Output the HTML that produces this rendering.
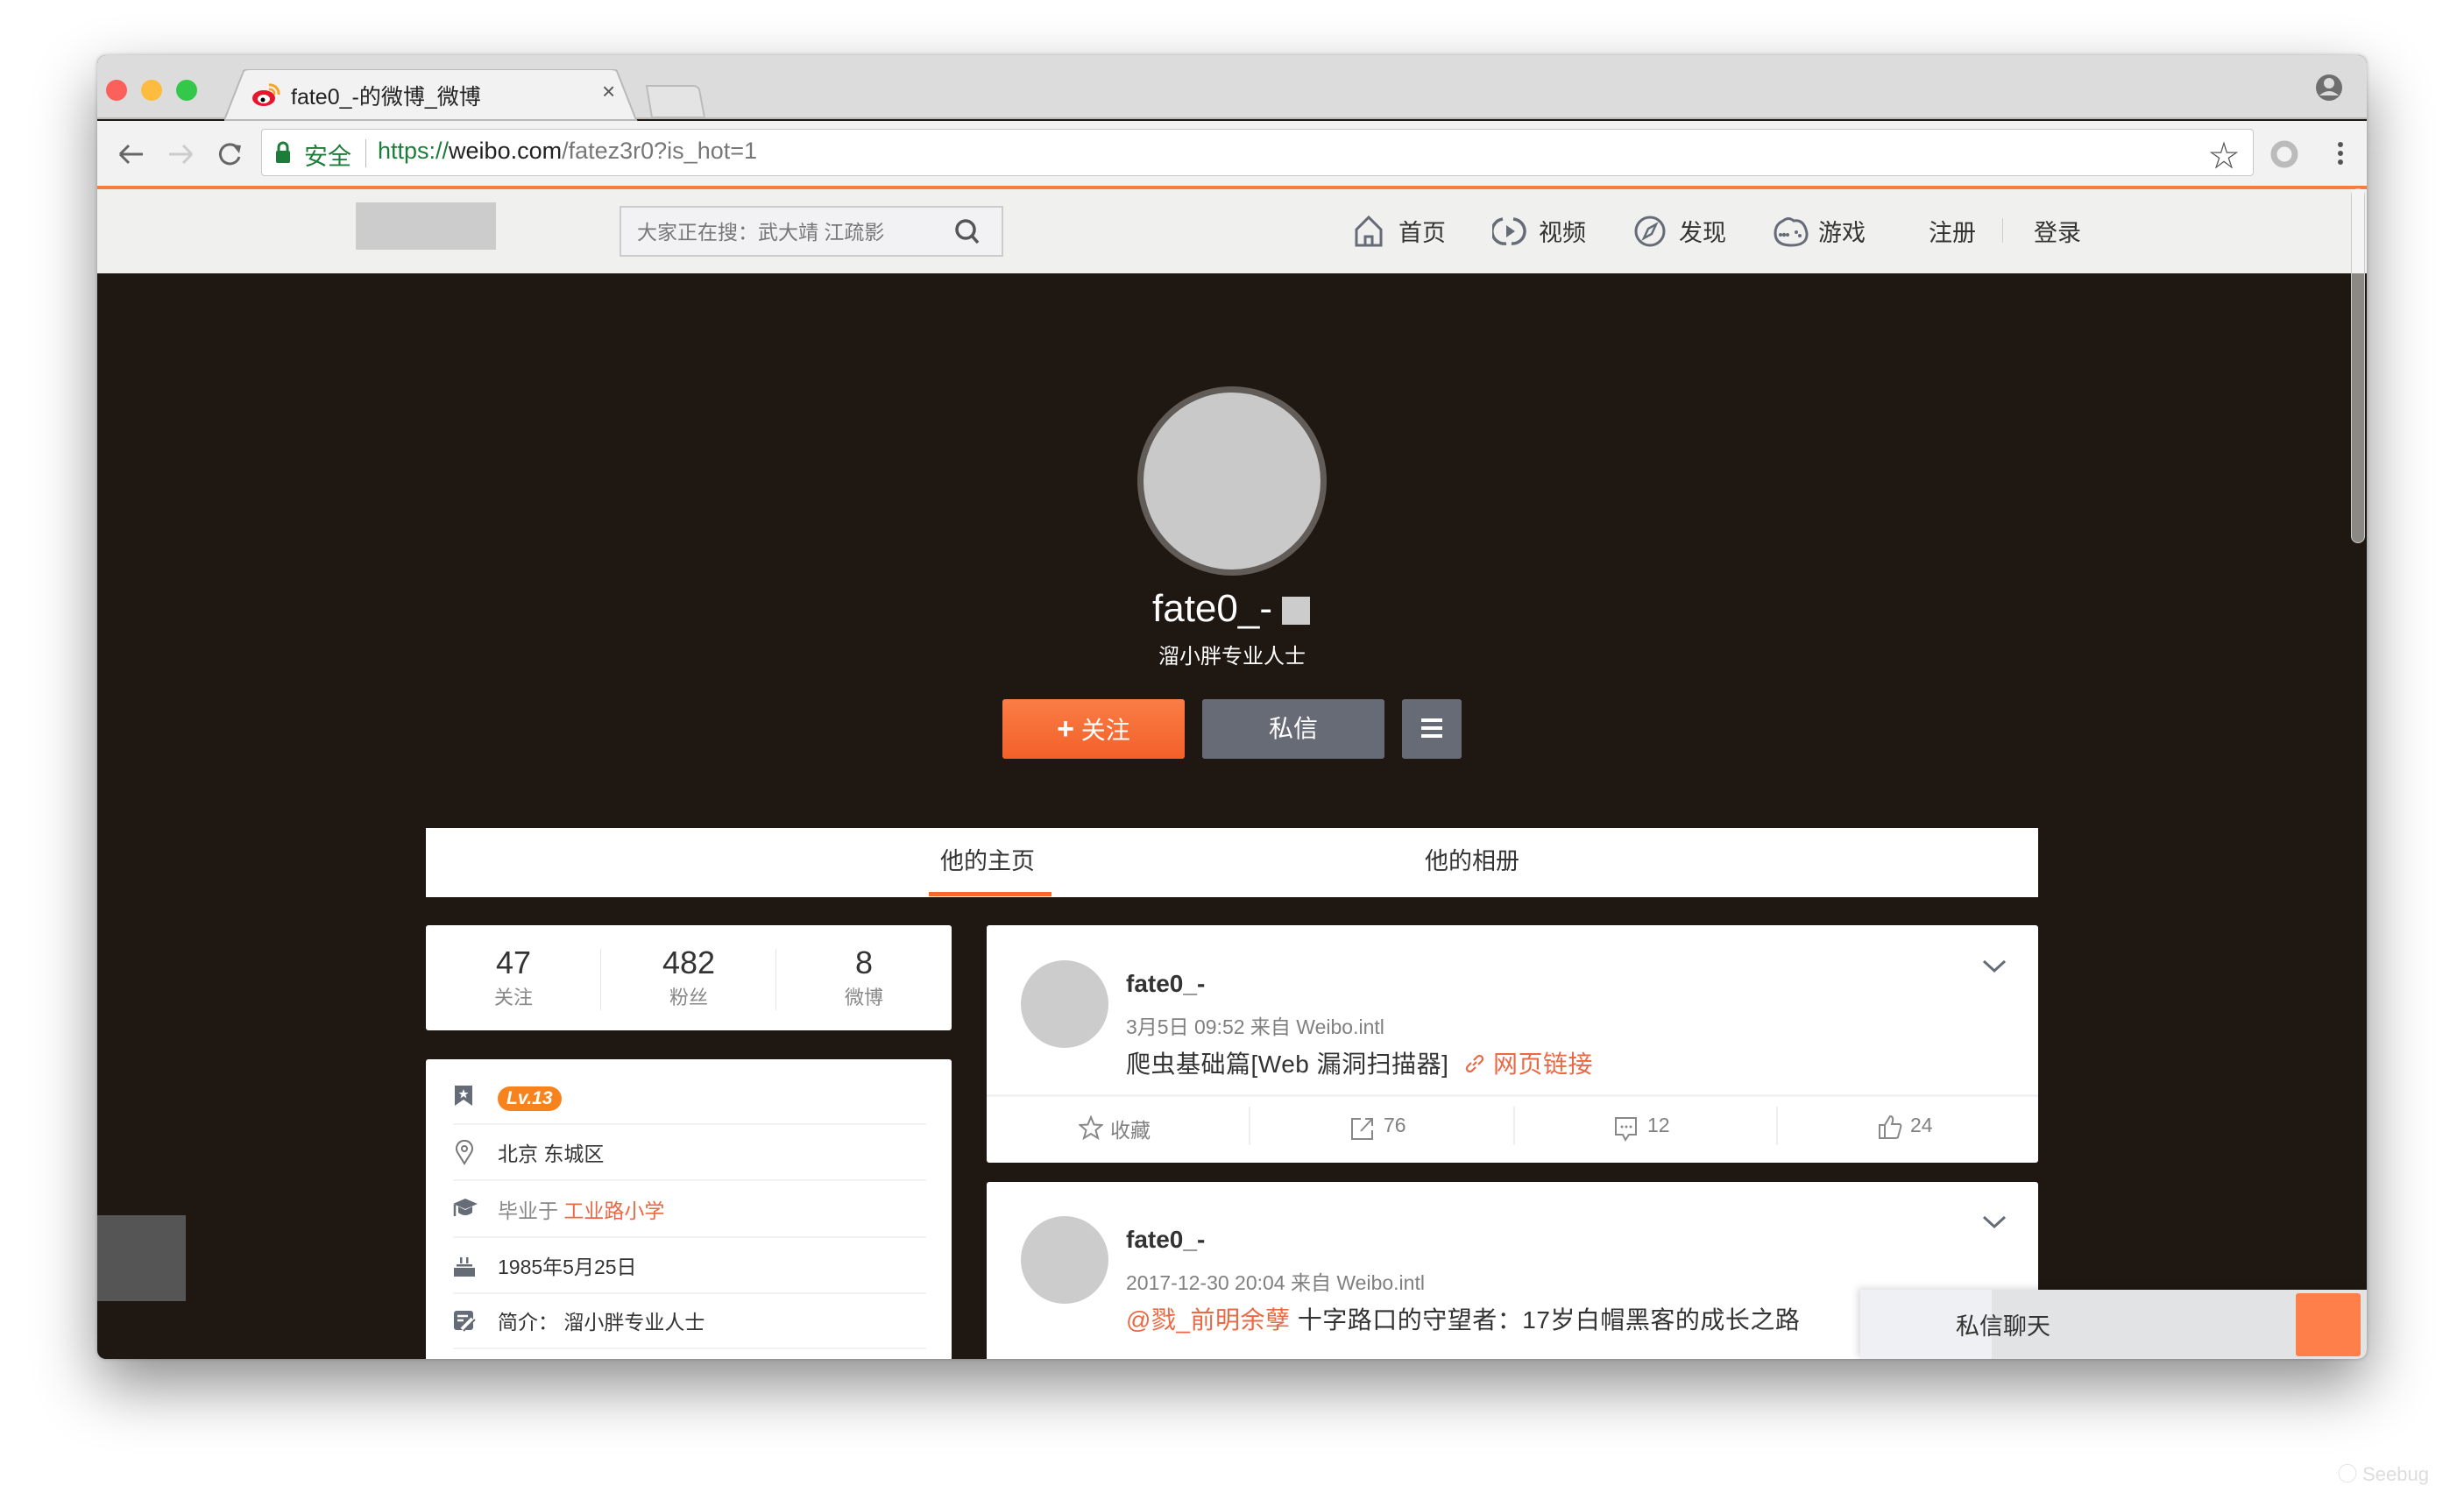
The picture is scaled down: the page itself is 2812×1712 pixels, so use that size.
<!DOCTYPE html>
<html><head><meta charset="utf-8">
<style>
*{margin:0;padding:0;box-sizing:border-box}
body{width:2812px;height:1712px;background:#fff;position:relative;overflow:hidden;font-family:"Liberation Sans","Noto Sans CJK SC",sans-serif;color:#333}
.a{position:absolute}
.win{left:111px;top:63px;width:2590px;height:1488px;border-radius:10px;overflow:hidden;background:#1f1712;box-shadow:0 30px 70px rgba(0,0,0,.45),0 0 4px rgba(0,0,0,.25)}
.t{white-space:nowrap}
</style></head><body>
<div class="a win">
  <div class="a" style="left:0;top:0;width:2590px;height:73px;background:#dcdcdc;border-bottom:2px solid #b8b8b8"></div>
  <div class="a" style="left:10px;top:28px;width:24px;height:24px;border-radius:50%;background:#fc605b"></div>
  <div class="a" style="left:50px;top:28px;width:24px;height:24px;border-radius:50%;background:#fdbc40"></div>
  <div class="a" style="left:90px;top:28px;width:24px;height:24px;border-radius:50%;background:#34c84a"></div>
  <svg class="a" style="left:145px;top:16px" width="480" height="60"><path d="M0 58 L22 2 Q24 0 30 0 L440 0 Q446 0 448 2 L470 58 Z" fill="#f2f2f2" stroke="#b8b8b8" stroke-width="2"/></svg>
  <svg class="a" style="left:625px;top:33px" width="70" height="40"><path d="M2 2 L55 2 Q60 2 62 6 L68 38 L8 38 Z" fill="#e4e4e4" stroke="#bbb" stroke-width="2"/></svg>
  <svg class="a" style="left:176px;top:30px" width="34" height="30"><ellipse cx="14" cy="19" rx="13" ry="9" fill="#e6162d"/><ellipse cx="14" cy="20" rx="7" ry="5" fill="#fff"/><circle cx="13" cy="21" r="2.5" fill="#000"/><path d="M20 4 A10 10 0 0 1 31 15" fill="none" stroke="#f5a623" stroke-width="3"/><path d="M20 9 A5 5 0 0 1 26 15" fill="none" stroke="#f5a623" stroke-width="2.5"/></svg>
  <div class="a t" style="left:221px;top:28px;font-size:25px;color:#222">fate0_-的微博_微博</div>
  <div class="a t" style="left:576px;top:26px;font-size:26px;color:#555">×</div>
  <svg class="a" style="left:2530px;top:20px" width="34" height="34"><circle cx="17" cy="17" r="15" fill="#6e6e6e"/><circle cx="17" cy="12" r="6" fill="#dcdcdc"/><path d="M6 26 Q17 16 28 26" fill="#dcdcdc"/></svg>
  <div class="a" style="left:0;top:75px;width:2590px;height:75px;background:#f2f2f2"></div>
  <svg class="a" style="left:22px;top:96px" width="150" height="34"><path d="M4 17 H30 M4 17 L14 7 M4 17 L14 27" stroke="#666" stroke-width="3" fill="none"/><path d="M60 17 H86 M86 17 L76 7 M86 17 L76 27" stroke="#ccc" stroke-width="3" fill="none"/><path d="M138 10 A11 11 0 1 0 140 20" stroke="#666" stroke-width="3" fill="none"/><path d="M132 6 L142 7 L140 16 Z" fill="#666"/></svg>
  <div class="a" style="left:187px;top:84px;width:2274px;height:54px;background:#fff;border:1px solid #c8c8c8;border-radius:4px"></div>
  <svg class="a" style="left:202px;top:98px" width="22" height="26"><rect x="2" y="11" width="16" height="14" rx="2" fill="#1c7c3a"/><path d="M5 12 V7 A5 5 0 0 1 15 7 V12" fill="none" stroke="#1c7c3a" stroke-width="3"/></svg>
  <div class="a t" style="left:236px;top:94px;font-size:27px;color:#1c7c3a">安全</div>
  <div class="a" style="left:306px;top:96px;width:1px;height:32px;background:#bbb"></div>
  <div class="a t" style="left:320px;top:94px;font-size:27px;color:#777"><span style="color:#1c7c3a">https://</span><span style="color:#222">weibo.com</span>/fatez3r0?is_hot=1</div>
  <div class="a t" style="left:2410px;top:88px;font-size:34px;color:#555">☆</div>
  <svg class="a" style="left:2479px;top:96px" width="34" height="34"><circle cx="17" cy="17" r="12" fill="none" stroke="#bbb" stroke-width="7"/></svg>
  <svg class="a" style="left:2554px;top:96px" width="12" height="34"><circle cx="6" cy="6" r="3" fill="#555"/><circle cx="6" cy="16" r="3" fill="#555"/><circle cx="6" cy="26" r="3" fill="#555"/></svg>
  <div class="a" style="left:0;top:149px;width:2590px;height:4px;background:#f77c3e"></div>
  <div class="a" style="left:0;top:153px;width:2590px;height:96px;background:#f0f0ef"></div>
  <div class="a" style="left:295px;top:168px;width:160px;height:54px;background:#ccc"></div>
  <div class="a" style="left:596px;top:172px;width:438px;height:58px;background:#f2f2f4;border:2px solid #ccc"></div>
  <div class="a t" style="left:616px;top:183px;font-size:23px;color:#777">大家正在搜：武大靖 江疏影</div>
  <svg class="a" style="left:976px;top:184px" width="34" height="34"><circle cx="15" cy="15" r="10" fill="none" stroke="#555" stroke-width="3.5"/><path d="M22 22 L29 30" stroke="#555" stroke-width="3.5"/></svg>
  <svg class="a" style="left:1432px;top:181px" width="40" height="40"><path d="M5 36 V18 L19 4 L33 18 V36 Z" fill="none" stroke="#666c77" stroke-width="3"/><path d="M15 36 V26 H23 V36" fill="none" stroke="#666c77" stroke-width="3"/></svg>
  <div class="a t" style="left:1485px;top:181px;font-size:27px;color:#333">首页</div>
  <svg class="a" style="left:1592px;top:181px" width="40" height="40"><path d="M12 6 A14 14 0 0 0 16 34 M24 6 A14 14 0 0 1 22 34" fill="none" stroke="#666c77" stroke-width="3.5"/><path d="M16 13 L26 20 L16 27 Z" fill="#666c77"/></svg>
  <div class="a t" style="left:1645px;top:181px;font-size:27px;color:#333">视频</div>
  <svg class="a" style="left:1752px;top:181px" width="40" height="40"><circle cx="20" cy="20" r="16" fill="none" stroke="#666c77" stroke-width="3"/><path d="M27 12 L22 23 L13 28 L18 17 Z" fill="none" stroke="#666c77" stroke-width="2.5"/></svg>
  <div class="a t" style="left:1805px;top:181px;font-size:27px;color:#333">发现</div>
  <svg class="a" style="left:1912px;top:181px" width="42" height="40"><path d="M12 8 Q18 3 24 8 Q36 6 39 22 Q40 36 21 36 Q3 36 3 22 Q3 12 12 8 Z" fill="none" stroke="#666c77" stroke-width="3"/><circle cx="13" cy="24" r="2.2" fill="#666c77"/><circle cx="9" cy="24" r="2" fill="#666c77"/><circle cx="17" cy="24" r="2" fill="#666c77"/><circle cx="27" cy="21" r="2" fill="#666c77"/><circle cx="31" cy="25" r="2" fill="#666c77"/></svg>
  <div class="a t" style="left:1964px;top:181px;font-size:27px;color:#333">游戏</div>
  <div class="a t" style="left:2090px;top:181px;font-size:27px;color:#333">注册</div>
  <div class="a" style="left:2174px;top:186px;width:1px;height:28px;background:#ccc"></div>
  <div class="a t" style="left:2210px;top:181px;font-size:27px;color:#333">登录</div>
  <div class="a" style="left:2572px;top:152px;width:16px;height:405px;border-radius:8px;background:#8c8884;border:1px solid #ccc"></div>
  <div class="a" style="left:2573px;top:153px;width:14px;height:96px;background:#f4f4f4"></div>
  <div class="a" style="left:1187px;top:378px;width:216px;height:216px;border-radius:50%;background:#c9c9c9;border:7px solid #625c58"></div>
  <div class="a t" style="left:1204px;top:606px;font-size:44px;color:#fff;line-height:52px">fate0_-</div>
  <div class="a" style="left:1352px;top:618px;width:32px;height:32px;background:#ccc"></div>
  <div class="a t" style="left:1200px;top:672px;font-size:24px;color:#fff;width:190px;text-align:center;line-height:30px">溜小胖专业人士</div>
  <div class="a t" style="left:1033px;top:735px;width:208px;height:68px;background:linear-gradient(#fa7d45,#f3602a);border-radius:3px;color:#fff;font-size:28px;text-align:center;line-height:68px"><b style="font-size:34px">+</b> 关注</div>
  <div class="a t" style="left:1261px;top:735px;width:208px;height:68px;background:#676b75;border-radius:3px;color:#fff;font-size:28px;text-align:center;line-height:68px">私信</div>
  <div class="a" style="left:1489px;top:735px;width:68px;height:68px;background:#676b75;border-radius:3px"></div>
  <div class="a" style="left:1511px;top:757px;width:24px;height:4px;background:#fff;box-shadow:0 9px #fff,0 18px #fff"></div>
  <div class="a" style="left:375px;top:882px;width:1840px;height:79px;background:#fff"></div>
  <div class="a t" style="left:962px;top:898px;font-size:27px;color:#333">他的主页</div>
  <div class="a" style="left:949px;top:955px;width:140px;height:5px;background:#f66b2b"></div>
  <div class="a t" style="left:1515px;top:898px;font-size:27px;color:#333">他的相册</div>
  <div class="a" style="left:375px;top:993px;width:600px;height:120px;background:#fff;border-radius:3px"></div>
  <div class="a t" style="left:375px;top:1015px;width:200px;text-align:center;font-size:36px;color:#333">47</div>
  <div class="a t" style="left:375px;top:1058px;width:200px;text-align:center;font-size:22px;color:#888">关注</div>
  <div class="a" style="left:574px;top:1020px;width:1px;height:70px;background:#e5e5e5"></div>
  <div class="a t" style="left:575px;top:1015px;width:200px;text-align:center;font-size:36px;color:#333">482</div>
  <div class="a t" style="left:575px;top:1058px;width:200px;text-align:center;font-size:22px;color:#888">粉丝</div>
  <div class="a" style="left:774px;top:1020px;width:1px;height:70px;background:#e5e5e5"></div>
  <div class="a t" style="left:775px;top:1015px;width:200px;text-align:center;font-size:36px;color:#333">8</div>
  <div class="a t" style="left:775px;top:1058px;width:200px;text-align:center;font-size:22px;color:#888">微博</div>
  <div class="a" style="left:375px;top:1146px;width:600px;height:350px;background:#fff;border-radius:3px"></div>
  <svg class="a" style="left:406px;top:1175px" width="26" height="26"><path d="M2 1 H22 V24 L12 17 L2 24 Z" fill="#666c77"/><path d="M12 5 L13.5 9 L17.5 9 L14.3 11.5 L15.5 15.5 L12 13 L8.5 15.5 L9.7 11.5 L6.5 9 L10.5 9 Z" fill="#fff"/></svg>
  <div class="a t" style="left:457px;top:1177px;height:28px;font-size:21px;color:#fff;background:#f7831f;border-radius:14px;padding:0 10px;line-height:28px;font-style:italic;font-weight:bold">Lv.13</div>
  <div class="a" style="left:406px;top:1219px;width:540px;height:2px;background:#f2f2f2"></div>
  <svg class="a" style="left:408px;top:1238px" width="22" height="30"><path d="M11 27 L3 14 A9 9 0 1 1 19 14 Z" fill="none" stroke="#777" stroke-width="2"/><circle cx="11" cy="10" r="3" fill="none" stroke="#777" stroke-width="2"/></svg>
  <div class="a t" style="left:457px;top:1235px;font-size:23px;color:#333">北京 东城区</div>
  <div class="a" style="left:406px;top:1283px;width:540px;height:2px;background:#f2f2f2"></div>
  <svg class="a" style="left:405px;top:1303px" width="30" height="26"><path d="M1 8 L15 2 L29 8 L15 14 Z" fill="#666c77"/><path d="M7 11 V18 Q15 24 23 18 V11 L15 15 Z" fill="#666c77"/><path d="M3 9 V22" stroke="#666c77" stroke-width="2.5"/></svg>
  <div class="a t" style="left:457px;top:1300px;font-size:23px;color:#888">毕业于 <span style="color:#eb6844">工业路小学</span></div>
  <div class="a" style="left:406px;top:1348px;width:540px;height:2px;background:#f2f2f2"></div>
  <svg class="a" style="left:406px;top:1369px" width="26" height="26"><rect x="1" y="15" width="24" height="10" fill="#666c77"/><rect x="4" y="11" width="18" height="2.5" fill="#666c77"/><rect x="8" y="3" width="2.5" height="7" fill="#666c77"/><rect x="15" y="3" width="2.5" height="7" fill="#666c77"/></svg>
  <div class="a t" style="left:457px;top:1364px;font-size:23px;color:#333">1985年5月25日</div>
  <div class="a" style="left:406px;top:1412px;width:540px;height:2px;background:#f2f2f2"></div>
  <svg class="a" style="left:406px;top:1432px" width="26" height="26"><rect x="1" y="1" width="22" height="22" rx="3" fill="#666c77"/><path d="M5 7 H17 M5 12 H12" stroke="#fff" stroke-width="2.5"/><path d="M10 22 L22 10" stroke="#fff" stroke-width="4"/><path d="M12 24 L25 11" stroke="#666c77" stroke-width="2"/></svg>
  <div class="a t" style="left:457px;top:1427px;font-size:23px;color:#333">简介：&nbsp;溜小胖专业人士</div>
  <div class="a" style="left:406px;top:1475px;width:540px;height:2px;background:#f2f2f2"></div>
  <div class="a" style="left:1015px;top:993px;width:1200px;height:271px;background:#fff;border-radius:3px"></div>
  <div class="a" style="left:1054px;top:1033px;width:100px;height:100px;border-radius:50%;background:#ccc"></div>
  <div class="a t" style="left:1174px;top:1044px;font-size:28px;color:#333;font-weight:bold">fate0_-</div>
  <div class="a t" style="left:1174px;top:1090px;font-size:23px;color:#808080">3月5日 09:52 来自 Weibo.intl</div>
  <div class="a t" style="left:1174px;top:1130px;font-size:28px;color:#333;letter-spacing:0.5px">爬虫基础篇[Web 漏洞扫描器]</div>
  <svg class="a" style="left:1560px;top:1139px" width="24" height="24"><path d="M10 14 L14 10 M8 11 L4 15 A3.5 3.5 0 0 0 9 20 L13 16 M16 13 L20 9 A3.5 3.5 0 0 0 15 4 L11 8" fill="none" stroke="#eb6844" stroke-width="2.2"/></svg>
  <div class="a t" style="left:1593px;top:1130px;font-size:28px;color:#eb6844;letter-spacing:0.5px">网页链接</div>
  <svg class="a" style="left:2150px;top:1030px" width="30" height="20"><path d="M3 4 L15 15 L27 4" fill="none" stroke="#666c77" stroke-width="3"/></svg>
  <div class="a" style="left:1015px;top:1186px;width:1200px;height:3px;background:#f2f2f2"></div>
  <svg class="a" style="left:1120px;top:1210px" width="28" height="28"><path d="M14 2 L17.5 10.5 L26.5 11 L19.5 17 L22 26 L14 21 L6 26 L8.5 17 L1.5 11 L10.5 10.5 Z" fill="none" stroke="#888" stroke-width="2"/></svg>
  <div class="a t" style="left:1156px;top:1208px;font-size:23px;color:#808080">收藏</div>
  <div class="a" style="left:1314px;top:1200px;width:2px;height:44px;background:#eee"></div>
  <svg class="a" style="left:1430px;top:1211px" width="28" height="28"><path d="M12 3 H2 V26 H25 V16" fill="none" stroke="#888" stroke-width="2"/><path d="M12 17 L25 3 M17 3 H25 V11" fill="none" stroke="#888" stroke-width="2"/></svg>
  <div class="a t" style="left:1468px;top:1208px;font-size:23px;color:#808080">76</div>
  <div class="a" style="left:1616px;top:1200px;width:2px;height:44px;background:#eee"></div>
  <svg class="a" style="left:1731px;top:1211px" width="28" height="30"><path d="M2 2 H25 V21 H17 L13 27 L10 21 H2 Z" fill="none" stroke="#888" stroke-width="2"/><circle cx="9" cy="12" r="1.5" fill="#888"/><circle cx="14" cy="12" r="1.5" fill="#888"/><circle cx="19" cy="12" r="1.5" fill="#888"/></svg>
  <div class="a t" style="left:1769px;top:1208px;font-size:23px;color:#808080">12</div>
  <div class="a" style="left:1916px;top:1200px;width:2px;height:44px;background:#eee"></div>
  <svg class="a" style="left:2032px;top:1209px" width="28" height="30"><path d="M2 12 H8 V27 H2 Z" fill="none" stroke="#888" stroke-width="2"/><path d="M8 12 L14 2 Q18 2 17 8 L16 11 H25 Q27 12 26 15 L23 26 Q22 27 20 27 H8" fill="none" stroke="#888" stroke-width="2"/></svg>
  <div class="a t" style="left:2069px;top:1208px;font-size:23px;color:#808080">24</div>
  <div class="a" style="left:1015px;top:1286px;width:1200px;height:220px;background:#fff;border-radius:3px"></div>
  <div class="a" style="left:1054px;top:1325px;width:100px;height:100px;border-radius:50%;background:#ccc"></div>
  <div class="a t" style="left:1174px;top:1336px;font-size:28px;color:#333;font-weight:bold">fate0_-</div>
  <div class="a t" style="left:1174px;top:1382px;font-size:23px;color:#808080">2017-12-30 20:04 来自 Weibo.intl</div>
  <div class="a t" style="left:1174px;top:1422px;font-size:28px;color:#333;letter-spacing:0.5px"><span style="color:#eb6844">@戮_前明余孽</span> 十字路口的守望者：17岁白帽黑客的成长之路</div>
  <svg class="a" style="left:2150px;top:1322px" width="30" height="20"><path d="M3 4 L15 15 L27 4" fill="none" stroke="#666c77" stroke-width="3"/></svg>
  <div class="a" style="left:0;top:1324px;width:101px;height:98px;background:#555"></div>
  <div class="a" style="left:2012px;top:1409px;width:578px;height:79px;background:#e2e3e5;box-shadow:-3px -2px 8px rgba(0,0,0,.15)"></div>
  <div class="a" style="left:2012px;top:1409px;width:150px;height:79px;background:#eff0f3"></div>
  <div class="a t" style="left:2121px;top:1429px;font-size:27px;color:#333">私信聊天</div>
  <div class="a" style="left:2509px;top:1413px;width:74px;height:72px;background:#ff7f4a;border-radius:3px"></div>
</div>
<div class="a t" style="left:2668px;top:1665px;font-size:22px;color:#ddd">◯ Seebug</div>
</body></html>
